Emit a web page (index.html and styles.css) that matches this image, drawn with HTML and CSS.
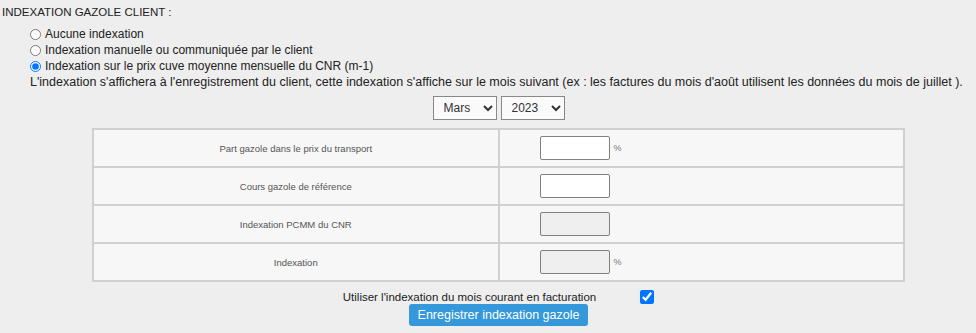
FILE: index.html
```html
<!DOCTYPE html>
<html lang="fr">

<head>
    <meta charset="UTF-8">
    <title>Indexation gazole client</title>
    <link rel="stylesheet" href="styles.css">
</head>

<body>
    <div class="section-title">INDEXATION GAZOLE CLIENT :</div>

    <!-- Choix du mode d'indexation -->
    <div class="options">
        <label class="option"><input type="radio" name="mode" value="none"> Aucune indexation</label>
        <label class="option"><input type="radio" name="mode" value="manual"> Indexation manuelle ou communiquée par le client</label>
        <label class="option"><input type="radio" name="mode" value="cnr" checked> Indexation sur le prix cuve moyenne mensuelle du CNR (m-1)</label>
        <p class="note">L'indexation s'affichera à l'enregistrement du client, cette indexation s'affiche sur le mois suivant (ex : les factures du mois d'août utilisent les données du mois de juillet ).</p>
    </div>

    <div class="panel">
        <div class="period">
            <select class="period-select">
                <option>Janvier</option>
                <option>Février</option>
                <option selected>Mars</option>
                <option>Avril</option>
            </select>
            <select class="period-select">
                <option>2022</option>
                <option selected>2023</option>
                <option>2024</option>
            </select>
        </div>

        <table class="index-table">
            <tr>
                <td class="label-cell">Part gazole dans le prix du transport</td>
                <td class="value-cell"><input type="text" class="value-input"><span class="unit">%</span></td>
            </tr>
            <tr>
                <td class="label-cell">Cours gazole de référence</td>
                <td class="value-cell"><input type="text" class="value-input"></td>
            </tr>
            <tr>
                <td class="label-cell">Indexation PCMM du CNR</td>
                <td class="value-cell"><input type="text" class="value-input" disabled></td>
            </tr>
            <tr>
                <td class="label-cell">Indexation</td>
                <td class="value-cell"><input type="text" class="value-input" disabled><span class="unit">%</span></td>
            </tr>
        </table>

        <div class="current-month">
            <label for="use-current">Utiliser l'indexation du mois courant en facturation</label>
            <input type="checkbox" id="use-current" checked>
        </div>

        <button class="save-btn" type="button">Enregistrer indexation gazole</button>
    </div>
</body>

</html>
```

FILE: styles.css
```css
body {
    margin: 0;
    padding: 0;
    background-color: #eeeeee;
    font-family: "Liberation Sans", Arial, sans-serif;
    font-size: 11px;
    color: #222222;
}

.section-title {
    padding: 5px 0 0 2px;
    height: 21px;
    line-height: 14px;
    font-size: 11.5px;
}

/* Radio list */
.options {
    padding-left: 30px;
}

.option {
    display: flex;
    align-items: center;
    height: 16px;
    font-size: 12px;
}

.option input {
    margin: 0 4px 0 0;
    width: 11px;
    height: 11px;
}

.note {
    margin: 0;
    height: 16px;
    line-height: 16px;
    font-size: 12.5px;
}

/* Centered block under the text */
.panel {
    width: 813px;
    margin-left: 92px;
    display: flex;
    flex-direction: column;
    align-items: center;
}

.period {
    display: flex;
    gap: 4px;
    margin-top: 6px;
}

.period-select {
    width: 64px;
    height: 24px;
    font-family: inherit;
    font-size: 12px;
    color: #333333;
    background-color: #fafafa;
    border: 1px solid #888888;
    border-radius: 0;
    padding-left: 6px;
}

.index-table {
    width: 100%;
    margin-top: 8px;
    border-collapse: collapse;
    background-color: #f7f7f7;
    border: 2px solid #d6d6d6;
}

.index-table td {
    height: 36px;
    padding: 0;
    border: 2px solid #d0d0d0;
}

.label-cell {
    width: 50%;
    text-align: center;
    font-size: 9.5px;
    color: #555555;
}

.value-cell {
    padding-left: 40px !important;
}

.value-input {
    width: 70px;
    height: 24px;
    box-sizing: border-box;
    border: 1px solid #808080;
    border-radius: 2px;
    background-color: #ffffff;
    vertical-align: middle;
    margin: 0;
}

.value-input:disabled {
    background-color: #efefef;
}

.unit {
    font-size: 9px;
    color: #777777;
    margin-left: 4px;
    vertical-align: middle;
}

.current-month {
    display: flex;
    align-items: center;
    gap: 44px;
    margin-top: 8px;
    font-size: 11.5px;
}

.current-month input {
    margin: 0;
    width: 14px;
    height: 14px;
}

.save-btn {
    margin-top: 0;
    width: 179px;
    height: 22px;
    padding: 0;
    border: none;
    border-radius: 3px;
    background-color: #3498db;
    color: #ffffff;
    font-family: inherit;
    font-size: 12.5px;
    cursor: pointer;
}

.save-btn:hover {
    background-color: #2a86c4;
}
```
